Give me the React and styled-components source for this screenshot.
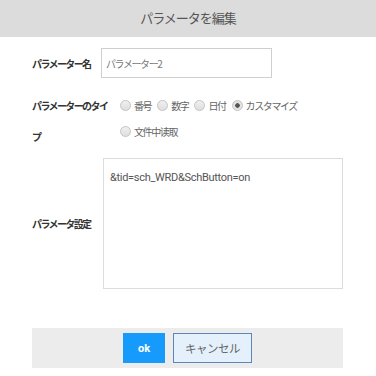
import React from 'react'
import styled, { createGlobalStyle } from 'styled-components'

const GlobalStyle = createGlobalStyle`
  body {
    margin: 0;
    background: #ffffff;
    font-family: "Noto Sans CJK JP", "Noto Sans", sans-serif;
  }
`

const params = ['番号', '数字', '日付', 'カスタマイズ', '文件中读取']

export const App = () => {
  return (
    <>
      <GlobalStyle />
      <Dialog>
        <Header>パラメータを編集</Header>
        <Form>
          <Row>
            <Label>パラメーター名</Label>
            <TextInput defaultValue="パラメーター2" />
          </Row>
          <TypeRow>
            <TypeLabel>パラメーターのタイプ</TypeLabel>
            <RadioGroup>
              {params.map((p) => (
                <RadioItem key={p}>
                  <Radio checked={p === 'カスタマイズ'} />
                  {p}
                </RadioItem>
              ))}
            </RadioGroup>
          </TypeRow>
          <Row>
            <Label>パラメータ設定</Label>
            <TextArea defaultValue="&tid=sch_WRD&SchButton=on" />
          </Row>
        </Form>
        <Footer>
          <OkButton>ok</OkButton>
          <CancelButton>キャンセル</CancelButton>
        </Footer>
      </Dialog>
    </>
  )
}

export default App

const Dialog = styled.div`
  width: 376px;
  height: 376px;
  background: #fff;
  display: flex;
  flex-direction: column;
`

const Header = styled.div`
  height: 37px;
  background: #dcdcdc;
  color: #555;
  font-size: 13px;
  letter-spacing: -1px;
  display: flex;
  align-items: center;
  justify-content: center;
  padding-bottom: 2px;
  box-sizing: border-box;
`

const Form = styled.div`
  padding: 11px 33px 0 32px;
  display: flex;
  flex-direction: column;
`

const Row = styled.div`
  display: grid;
  grid-template-columns: 70px 1fr;
  align-items: center;
  margin-bottom: 6px;
`

const Label = styled.div`
  font-size: 10px;
  font-weight: bold;
  color: #333;
  letter-spacing: -1.6px;
`

const TypeRow = styled.div`
  display: grid;
  grid-template-columns: 70px 1fr;
  align-items: start;
  margin-top: 6px;
  margin-bottom: 6px;
`

const TypeLabel = styled(Label)`
  line-height: 31px;
  width: 80px;
`

const TextInput = styled.input`
  width: 171px;
  height: 30px;
  box-sizing: border-box;
  border: 1px solid #cfcfcf;
  padding: 0 4px;
  font-family: "Noto Sans CJK JP", sans-serif;
  font-size: 10px;
  letter-spacing: -1.4px;
  color: #777;
  margin-left: -1px;
  outline: none;
`

const RadioGroup = styled.div`
  display: flex;
  flex-wrap: wrap;
  column-gap: 6px;
  padding-left: 18px;
  padding-top: 2px;
`

const RadioItem = styled.label`
  display: flex;
  align-items: center;
  height: 26px;
  font-size: 10px;
  letter-spacing: -1.4px;
  color: #666;
`

const Radio = styled.span`
  width: 9px;
  height: 9px;
  border-radius: 50%;
  border: 1px solid #c4c4c4;
  background: ${(p) =>
    p.checked
      ? 'radial-gradient(circle, #555 0 2px, #e2e2e2 2.5px)'
      : 'linear-gradient(#f0f0f0, #dedede)'};
  margin-right: 3px;
  flex-shrink: 0;
`

const TextArea = styled.textarea`
  width: 240px;
  height: 131px;
  box-sizing: border-box;
  border: 1px solid #dcdcdc;
  padding: 12px 6px;
  font-family: Roboto, "Liberation Sans", sans-serif;
  font-size: 11px;
  letter-spacing: -0.3px;
  color: #555;
  resize: none;
  outline: none;
  margin-left: 1px;
`

const Footer = styled.div`
  margin: 33px 33px 0 32px;
  height: 40px;
  background: #ececec;
  display: flex;
  align-items: center;
  justify-content: center;
  gap: 8px;
`

const OkButton = styled.button`
  width: 42px;
  height: 30px;
  border: none;
  background: #169bfd;
  color: #fff;
  font-family: Roboto, sans-serif;
  font-weight: bold;
  font-size: 11px;
`

const CancelButton = styled.button`
  width: 79px;
  height: 30px;
  border: 1px solid #5a86b8;
  background: #e4f0fb;
  color: #666;
  font-family: "Noto Sans CJK JP", sans-serif;
  font-size: 11.5px;
  letter-spacing: -0.5px;
`
